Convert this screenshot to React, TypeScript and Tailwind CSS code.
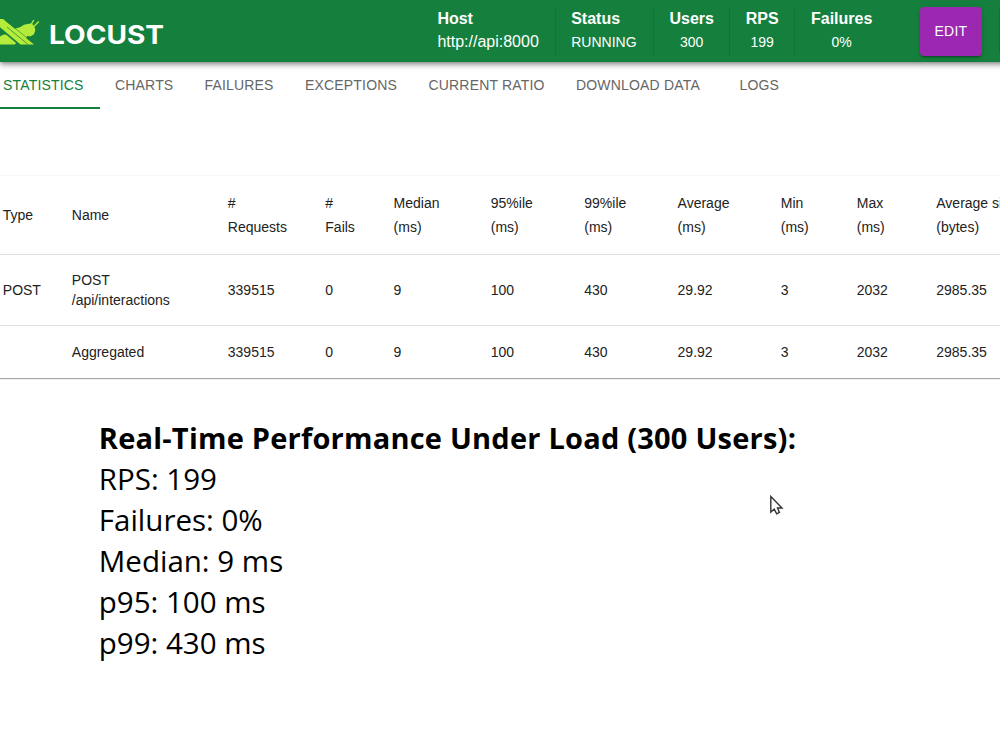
import React from "react";

const stats = [
  { label: "Status", value: "RUNNING", box: "w-[98.5px] pl-[15.5px] items-start" },
  { label: "Users", value: "300", box: "w-[76px] items-center" },
  { label: "RPS", value: "199", box: "w-[65px] items-center" },
  { label: "Failures", value: "0%", box: "w-[93px] items-center border-r-0" },
];

const tabs = [
  { name: "CHARTS", box: "w-[89.5px]" },
  { name: "FAILURES", box: "w-[100.5px]" },
  { name: "EXCEPTIONS", box: "w-[123.5px]" },
  { name: "CURRENT RATIO", box: "w-[147.5px]" },
  { name: "DOWNLOAD DATA", box: "w-[163.5px]" },
  { name: "LOGS", box: "w-[80px]" },
];

const headers = [
  ["Type"],
  ["Name"],
  ["#", "Requests"],
  ["#", "Fails"],
  ["Median", "(ms)"],
  ["95%ile", "(ms)"],
  ["99%ile", "(ms)"],
  ["Average", "(ms)"],
  ["Min", "(ms)"],
  ["Max", "(ms)"],
  ["Average size", "(bytes)"],
];

const values = ["339515", "0", "9", "100", "430", "29.92", "3", "2032", "2985.35"];

const columns =
  "grid grid-cols-[69px_156px_97.5px_68.3px_97.2px_93.5px_93.3px_103.2px_76px_79.5px_100px] items-center pl-[2.8px]";

function Logo() {
  return (
    <svg className="h-[31px] w-[40px] shrink-0" viewBox="0 0 40 31" fill="none">
      <path
        d="M12 16L15 14.6L20 13.2L24 10.8L29 9.8L32 9.4L34.8 13.5L35.3 16.5L33.8 20.5L30 22.4L27.5 21.8L25.5 25Z"
        fill="#b5ec3c"
      />
      <path d="M30.8 11L33.8 6 M33.8 12.5L38.8 7.4" stroke="#b5ec3c" strokeWidth="1.4" />
      <path d="M0 30.4V22.5L3 20.8L6 20.5L16 29L15 30.4Z" fill="#b5ec3c" />
      <path d="M0 5H3L34 30.4H20.5L0 13.2Z" fill="#b5ec3c" />
      <path d="M6 6.8L35 30.4" stroke="#15803d" strokeWidth="0.6" />
      <path d="M7 13L28 30.4" stroke="#15803d" strokeWidth="0.7" />
    </svg>
  );
}

function Cell({ lines }: { lines: string[] }) {
  return (
    <div className="whitespace-nowrap">
      {lines.map((line) => (
        <div key={line}>{line}</div>
      ))}
    </div>
  );
}

export default function App() {
  return (
    <div className="relative h-[750px] w-[1000px] overflow-hidden bg-white font-['Liberation_Sans',Arial,sans-serif] text-[#222]">
      <header className="relative flex h-[62.4px] w-[1060px] bg-[#15803d] text-white shadow-[0_2px_4px_-1px_rgba(0,0,0,0.35),0_4px_5px_0_rgba(0,0,0,0.16),0_1px_9px_0_rgba(0,0,0,0.12)]">
        <div className="flex w-[437.4px] items-start pt-[14px]">
          <Logo />
          <span className="mt-[5px] ml-[8.5px] origin-left scale-x-[1.1] font-['Inter',sans-serif] text-[25.5px] leading-[31px] font-bold">
            LOCUST
          </span>
        </div>
        <div className="mt-[7px] flex h-[48.5px] w-[118.3px] flex-col border-r border-[#13713a]">
          <b className="text-[16px] leading-[23px]">Host</b>
          <span className="text-[16px] leading-[23px]">http://api:8000</span>
        </div>
        {stats.map((s) => (
          <div
            key={s.label}
            className={`mt-[7px] flex h-[48.5px] flex-col border-r border-[#13713a] ${s.box}`}
          >
            <b className="text-[16px] leading-[23px]">{s.label}</b>
            <span className="text-[14px] leading-[24px]">{s.value}</span>
          </div>
        ))}
        <button className="mt-[7px] ml-[31.5px] h-[48.5px] w-[62.5px] rounded-[4px] bg-[#9c27b0] text-[14px] tracking-[0.2px] shadow-[0_3px_1px_-2px_rgba(0,0,0,0.2),0_2px_2px_0_rgba(0,0,0,0.14),0_1px_5px_0_rgba(0,0,0,0.12)]">
          EDIT
        </button>
        <div className="mt-[7px] ml-[17px] h-[48px] w-[60px] rounded-[4px] bg-[#1b6b37]" />
      </header>

      <nav className="flex h-[47px] text-[14px] leading-[46px] tracking-[0.18px] text-[#666]">
        <div className="w-[99.5px] border-b-2 border-[#15803d] pl-[3px] text-[#15803d]">STATISTICS</div>
        {tabs.map((t) => (
          <div key={t.name} className={`pl-[15.5px] whitespace-nowrap ${t.box}`}>
            {t.name}
          </div>
        ))}
      </nav>

      <main className="pt-[66px]">
        <section className="w-[1066px] border-t border-[#f8f8f8] text-[14px] shadow-[0_1px_1px_rgba(0,0,0,0.35)]">
          <div className={`h-[78.5px] border-b border-[#e0e0e0] leading-[24px] ${columns}`}>
            {headers.map((h, i) => (
              <Cell key={i} lines={h} />
            ))}
          </div>
          <div className={`h-[71px] border-b border-[#e0e0e0] pt-px leading-[20px] ${columns}`}>
            <Cell lines={["POST"]} />
            <Cell lines={["POST", "/api/interactions"]} />
            {values.map((v, i) => (
              <Cell key={i} lines={[v]} />
            ))}
          </div>
          <div className={`h-[52px] pt-px leading-[19.5px] ${columns}`}>
            <span />
            <Cell lines={["Aggregated"]} />
            {values.map((v, i) => (
              <Cell key={i} lines={[v]} />
            ))}
          </div>
        </section>

        <section className="mt-[39.4px] pl-[98.8px] font-['Open_Sans',sans-serif] text-[29.5px] leading-[41px] text-black">
          <h1 className="text-[29px] font-bold tracking-[0.22px]">Real-Time Performance Under Load (300 Users):</h1>
          <p>RPS: 199</p>
          <p>Failures: 0%</p>
          <p>Median: 9 ms</p>
          <p>p95: 100 ms</p>
          <p>p99: 430 ms</p>
        </section>
      </main>

      <svg className="absolute top-[495px] left-[769px] h-[21px] w-[15px]" viewBox="0 0 15 21">
        <path
          d="M1.8 1.5V17.2L5.2 14.1L7.7 18.8L10.4 17.5L8.5 13H13Z"
          fill="#fff"
          stroke="#333"
          strokeWidth="1.4"
        />
      </svg>
    </div>
  );
}
